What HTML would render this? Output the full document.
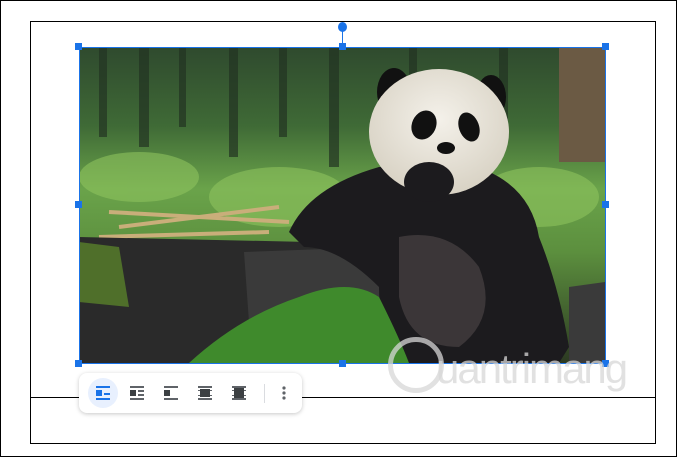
<!DOCTYPE html>
<html><head><style>
html,body{margin:0;padding:0;width:677px;height:457px;background:#fff;overflow:hidden;font-family:"Liberation Sans",sans-serif}
.abs{position:absolute}
.h{position:absolute;width:7px;height:7px;background:#1a73e8}
.tb{position:absolute;left:79px;top:373px;width:223px;height:40px;background:#fff;border-radius:8px;box-shadow:0 1px 4px rgba(0,0,0,.22)}
</style></head><body>
<div class="abs" style="left:0;top:0;width:675px;height:455px;border:1px solid #000"></div>
<div class="abs" style="left:30px;top:21px;width:624px;height:421px;border:1px solid #000"></div>
<div class="abs" style="left:30px;top:397px;width:625px;height:1px;background:#000"></div>

<svg class="abs" style="left:79px;top:47px" width="526" height="316" viewBox="0 0 526 316">
<defs>
<linearGradient id="bg" x1="0" y1="0" x2="0" y2="1">
<stop offset="0" stop-color="#2f4a2e"/><stop offset=".25" stop-color="#3f6a36"/><stop offset=".45" stop-color="#6aa34a"/><stop offset=".65" stop-color="#5c8f3e"/><stop offset="1" stop-color="#2c3a22"/></linearGradient>
<radialGradient id="fur" cx=".5" cy=".4" r=".6"><stop offset="0" stop-color="#f4f1ea"/><stop offset="1" stop-color="#d8d2c4"/></radialGradient>
</defs>
<rect width="526" height="316" fill="url(#bg)"/>
<g fill="#223322" opacity=".7">
<rect x="20" y="0" width="8" height="90"/><rect x="60" y="0" width="10" height="100"/><rect x="100" y="0" width="7" height="80"/><rect x="150" y="0" width="9" height="110"/><rect x="200" y="0" width="8" height="90"/><rect x="250" y="0" width="10" height="120"/><rect x="330" y="0" width="8" height="100"/><rect x="420" y="0" width="9" height="80"/>
</g>
<g fill="#8ec35e" opacity=".6"><ellipse cx="60" cy="130" rx="60" ry="25"/><ellipse cx="200" cy="150" rx="70" ry="30"/><ellipse cx="460" cy="150" rx="60" ry="30"/></g>
<rect x="480" y="0" width="46" height="115" fill="#6b5a44"/>
<g stroke="#c9ae7a" stroke-width="4"><line x1="30" y1="165" x2="210" y2="175"/><line x1="40" y1="180" x2="200" y2="160"/><line x1="20" y1="190" x2="190" y2="185"/></g>
<path d="M0 190 L230 195 L260 205 L310 200 L320 316 L0 316Z" fill="#2a2a2a"/>
<path d="M0 195 L40 200 L50 260 L0 255Z" fill="#4f6f2a"/>
<path d="M165 205 L300 200 L310 280 L170 275Z" fill="#3a3a3a"/>
<path d="M490 240 L526 235 L526 316 L490 316Z" fill="#3a3a3a"/>
<path d="M210 185 Q230 140 300 120 L380 115 Q450 130 460 190 Q480 240 490 300 L480 316 L320 316 Q300 280 300 240 Q260 200 225 200Z" fill="#1c1b1e"/>
<path d="M320 190 Q370 180 400 220 Q420 270 380 300 Q330 300 320 250Z" fill="#3b3638"/>
<ellipse cx="315" cy="45" rx="17" ry="24" fill="#111"/>
<ellipse cx="412" cy="50" rx="15" ry="22" fill="#111"/>
<ellipse cx="360" cy="85" rx="70" ry="63" fill="url(#fur)"/>
<ellipse cx="345" cy="78" rx="12" ry="15" fill="#111" transform="rotate(25 345 78)"/>
<ellipse cx="390" cy="80" rx="10" ry="15" fill="#111" transform="rotate(-20 390 80)"/>
<ellipse cx="367" cy="101" rx="9" ry="6" fill="#111"/>
<ellipse cx="350" cy="135" rx="25" ry="20" fill="#1c1b1e"/>
<path d="M110 316 Q160 270 220 250 Q270 230 300 250 Q320 290 330 316Z" fill="#3f8a2c"/>
</svg>
<div class="abs" style="left:79px;top:47px;border:1px solid #1a73e8;box-sizing:border-box;width:527px;height:317px"></div>
<div class="abs" style="left:342px;top:27px;width:1px;height:20px;background:#1a73e8"></div>
<div class="abs" style="left:338px;top:22px;width:9px;height:10px;border-radius:50%;background:#1a73e8"></div>
<div class="h" style="left:75px;top:43px"></div><div class="h" style="left:339px;top:43px"></div><div class="h" style="left:602px;top:43px"></div>
<div class="h" style="left:75px;top:201px"></div><div class="h" style="left:602px;top:201px"></div>
<div class="h" style="left:75px;top:360px"></div><div class="h" style="left:339px;top:360px"></div><div class="h" style="left:602px;top:360px"></div>
<div class="abs" style="left:388px;top:337px;width:56px;height:56px;border:5px solid rgba(215,215,215,.75);border-radius:50%;box-sizing:border-box"></div>
<div class="abs" style="left:436px;top:346px;font-size:42px;color:rgba(215,215,215,.75);letter-spacing:-2px;line-height:46px">uantrimang</div>

<div class="tb">
<div class="abs" style="left:9px;top:5px;width:30px;height:30px;border-radius:50%;background:#e8f0fe"></div>
<svg class="abs" style="left:0;top:0" width="223" height="40">
<g fill="#1a73e8"><rect x="17" y="13" width="14" height="2"/><rect x="17" y="17" width="6" height="6"/><rect x="25" y="20" width="6" height="2"/><rect x="17" y="25" width="14" height="2"/></g>
<g fill="#5f6368"><rect x="51" y="13" width="14" height="2"/><rect x="59" y="17" width="6" height="2"/><rect x="59" y="21" width="6" height="2"/><rect x="51" y="25" width="14" height="2"/></g>
<rect x="51" y="17" width="6" height="6" fill="#3c4043"/>
<g fill="#5f6368"><rect x="85" y="13" width="14" height="2"/><rect x="85" y="25" width="14" height="2"/></g>
<rect x="85" y="17" width="6" height="6" fill="#3c4043"/>
<g fill="#5f6368"><rect x="119" y="13" width="14" height="2"/><rect x="119" y="25" width="14" height="2"/><rect x="119" y="17" width="14" height="1"/><rect x="119" y="22" width="14" height="1"/></g>
<rect x="121" y="16" width="10" height="8" fill="#3c4043"/>
<g fill="#5f6368"><rect x="153" y="13" width="14" height="2"/><rect x="153" y="25" width="14" height="2"/><rect x="153" y="17" width="14" height="1"/><rect x="153" y="22" width="14" height="1"/></g>
<rect x="155" y="15" width="10" height="10" fill="#3c4043"/>
<rect x="185" y="11" width="1" height="19" fill="#dadce0"/>
<g fill="#5f6368"><circle cx="205" cy="15" r="1.6"/><circle cx="205" cy="20" r="1.6"/><circle cx="205" cy="25" r="1.6"/></g>
</svg>
</div>
</body></html>
